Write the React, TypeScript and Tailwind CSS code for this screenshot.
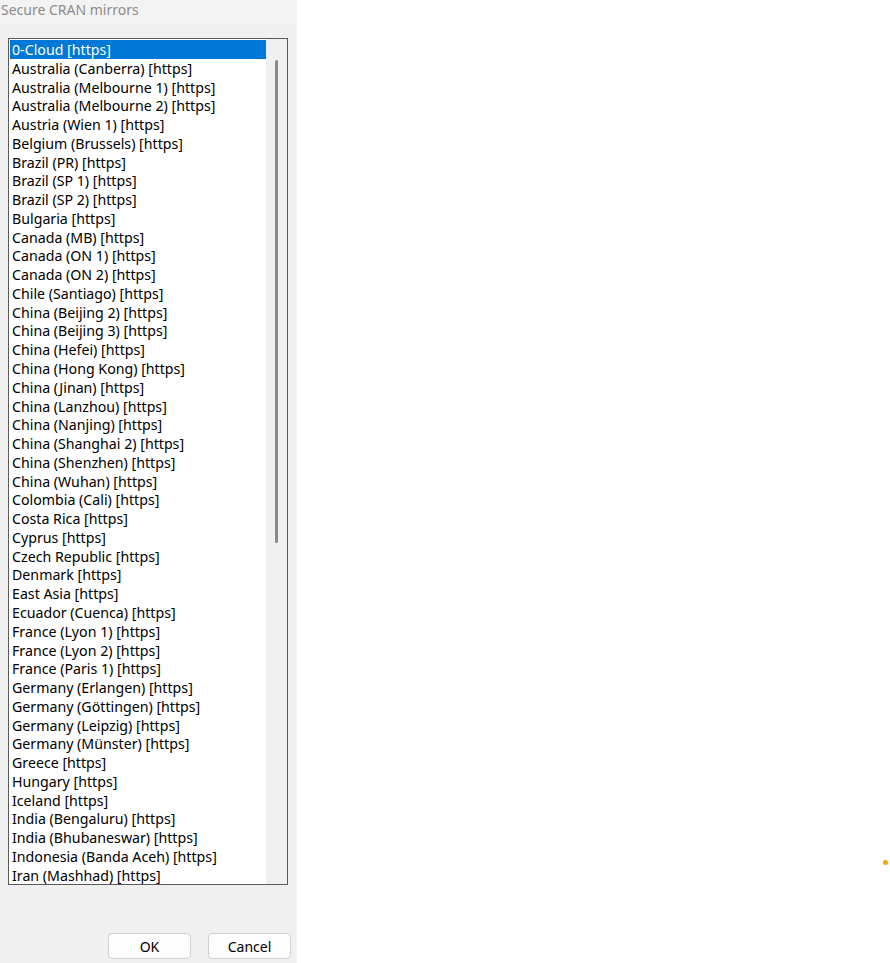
const mirrors = [
  '0-Cloud [https]',
  'Australia (Canberra) [https]',
  'Australia (Melbourne 1) [https]',
  'Australia (Melbourne 2) [https]',
  'Austria (Wien 1) [https]',
  'Belgium (Brussels) [https]',
  'Brazil (PR) [https]',
  'Brazil (SP 1) [https]',
  'Brazil (SP 2) [https]',
  'Bulgaria [https]',
  'Canada (MB) [https]',
  'Canada (ON 1) [https]',
  'Canada (ON 2) [https]',
  'Chile (Santiago) [https]',
  'China (Beijing 2) [https]',
  'China (Beijing 3) [https]',
  'China (Hefei) [https]',
  'China (Hong Kong) [https]',
  'China (Jinan) [https]',
  'China (Lanzhou) [https]',
  'China (Nanjing) [https]',
  'China (Shanghai 2) [https]',
  'China (Shenzhen) [https]',
  'China (Wuhan) [https]',
  'Colombia (Cali) [https]',
  'Costa Rica [https]',
  'Cyprus [https]',
  'Czech Republic [https]',
  'Denmark [https]',
  'East Asia [https]',
  'Ecuador (Cuenca) [https]',
  'France (Lyon 1) [https]',
  'France (Lyon 2) [https]',
  'France (Paris 1) [https]',
  'Germany (Erlangen) [https]',
  'Germany (Göttingen) [https]',
  'Germany (Leipzig) [https]',
  'Germany (Münster) [https]',
  'Greece [https]',
  'Hungary [https]',
  'Iceland [https]',
  'India (Bengaluru) [https]',
  'India (Bhubaneswar) [https]',
  'Indonesia (Banda Aceh) [https]',
  'Iran (Mashhad) [https]',
];

export default function App() {
  return (
    <div className="flex w-[890px] h-[963px] bg-white font-['Noto_Sans',sans-serif] text-[14px]">
      <div className="flex flex-col w-[297px] h-full bg-[#f0f0f0]">
        <div className="h-[25px] bg-[#f3f3f3] pl-[1px] text-[#8c8c8c] leading-[19px]">Secure CRAN mirrors</div>

        {/* listbox */}
        <div className="ml-[8px] mt-[13px] w-[280px] h-[847px] border border-[#5a5a5a] flex bg-white">
          <div className="flex-1 pl-[1px] pt-[1px] overflow-hidden text-[14.2px]">
            {mirrors.map((m, i) => (
              <div
                key={m}
                className={
                  i === 0
                    ? 'h-[18.77px] pl-[2px] leading-[19.5px] whitespace-nowrap bg-[#0078d7] text-white'
                    : 'h-[18.77px] pl-[2px] leading-[19.5px] whitespace-nowrap text-black'
                }
              >
                {m}
              </div>
            ))}
          </div>
          <div className="w-[21px] bg-[#f0f0f0] flex justify-center pt-[21px]">
            <div className="w-[3px] h-[483px] rounded-full bg-[#8a8a8a]" />
          </div>
        </div>

        <div className="flex-1" />
        <div className="flex justify-end gap-[17px] pr-[6px] pb-[4px]">
          <button className="w-[83px] h-[26px] bg-[#fdfdfd] border border-[#d0d0d0] rounded-[4px] text-black">OK</button>
          <button className="w-[83px] h-[26px] bg-[#fdfdfd] border border-[#d0d0d0] rounded-[4px] text-black">Cancel</button>
        </div>
      </div>
      <div className="flex-1 flex justify-end items-start pt-[860px] pr-[2px]">
        <div className="w-[5px] h-[5px] rounded-full bg-[#f7a400]" />
      </div>
    </div>
  );
}
